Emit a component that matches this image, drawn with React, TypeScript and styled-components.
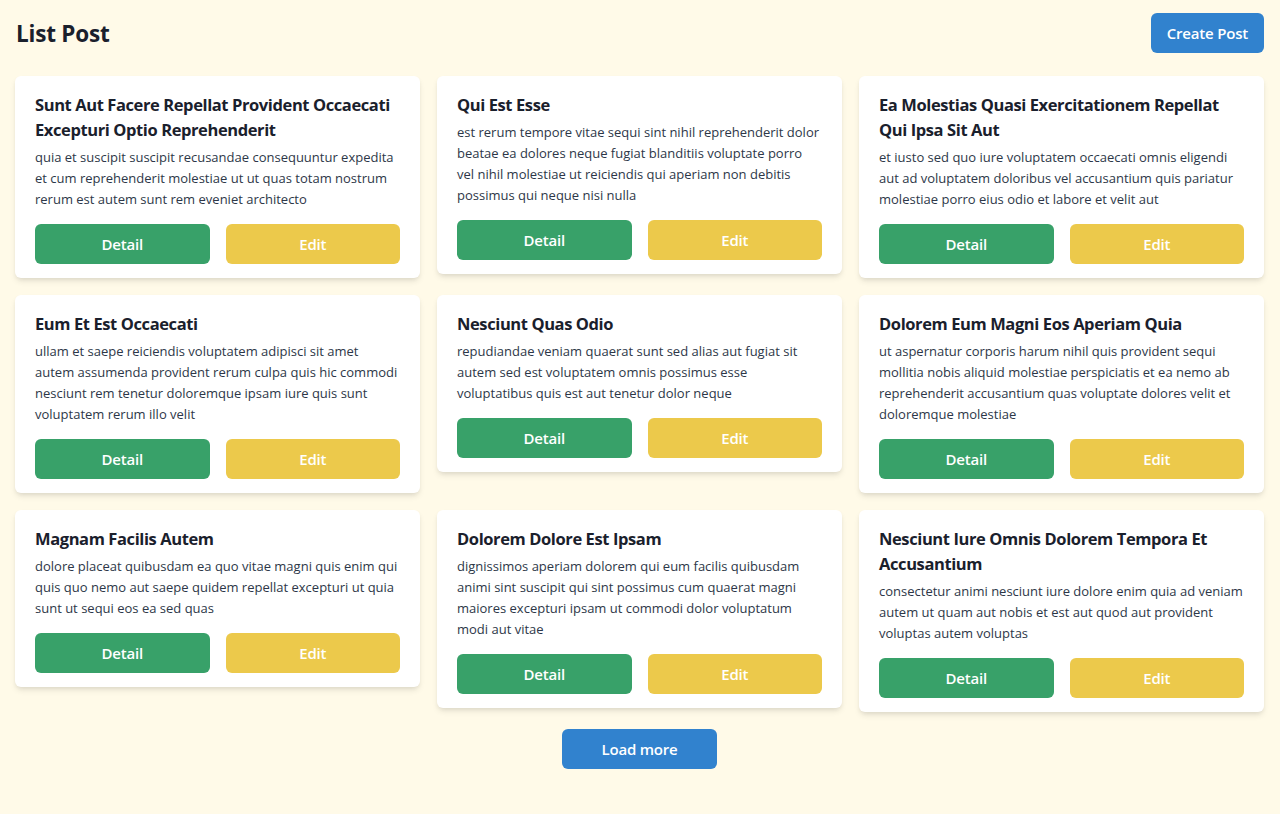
import React from "react";
import styled, { createGlobalStyle } from "styled-components";

const GlobalStyle = createGlobalStyle`
  html, body {
    margin: 0;
    padding: 0;
    background: #fffae8;
  }
  body {
    font-family: "Open Sans", "Noto Sans", sans-serif;
    color: #1a202c;
  }
  * { box-sizing: border-box; }
`;

const Page = styled.main`
  min-height: 814px;
  padding: 13px 16px 40px 15px;
  background: #fffae8;
`;

const Header = styled.header`
  display: flex;
  align-items: center;
  justify-content: space-between;
  height: 40px;
`;

const Title = styled.h1`
  margin: 0 0 0 1px;
  font-size: 22.5px;
  font-weight: 700;
  color: #1a202c;
  letter-spacing: -0.2px;
  line-height: 1;
  padding-top: 2px;
`;

const Button = styled.button<{ $tone: "blue" | "green" | "yellow"; $width?: number }>`
  height: 40px;
  border: none;
  border-radius: 6px;
  padding: 0 16px;
  font-family: inherit;
  font-size: 15px;
  font-weight: 600;
  letter-spacing: -0.2px;
  color: #ffffff;
  cursor: pointer;
  width: ${(p) => (p.$width ? `${p.$width}px` : "auto")};
  background: ${(p) =>
    p.$tone === "blue" ? "#3182ce" : p.$tone === "green" ? "#38a169" : "#ecc94b"};
`;

const Grid = styled.section`
  display: grid;
  grid-template-columns: repeat(3, 1fr);
  gap: 17px;
  align-items: start;
  margin-top: 23px;
`;

const Card = styled.article`
  background: #ffffff;
  border-radius: 6px;
  padding: 16px 20px 14px;
  box-shadow: 0 4px 6px -1px rgba(0, 0, 0, 0.1), 0 2px 4px -1px rgba(0, 0, 0, 0.06);
`;

const CardTitle = styled.h2`
  margin: 0 0 5px;
  font-size: 16.5px;
  line-height: 25px;
  font-weight: 700;
  letter-spacing: -0.4px;
  color: #1a202c;
`;

const CardBody = styled.p`
  margin: 0;
  font-size: 13px;
  line-height: 21px;
  color: #2d3748;
`;

const Actions = styled.div`
  display: grid;
  grid-template-columns: 1fr 1fr;
  gap: 16px;
  margin-top: 14px;
`;

const Footer = styled.div`
  display: flex;
  justify-content: center;
  margin-top: 17px;
`;

const posts = [
  {
    title: "Sunt Aut Facere Repellat Provident Occaecati Excepturi Optio Reprehenderit",
    body: "quia et suscipit suscipit recusandae consequuntur expedita et cum reprehenderit molestiae ut ut quas totam nostrum rerum est autem sunt rem eveniet architecto",
  },
  {
    title: "Qui Est Esse",
    body: "est rerum tempore vitae sequi sint nihil reprehenderit dolor beatae ea dolores neque fugiat blanditiis voluptate porro vel nihil molestiae ut reiciendis qui aperiam non debitis possimus qui neque nisi nulla",
  },
  {
    title: "Ea Molestias Quasi Exercitationem Repellat Qui Ipsa Sit Aut",
    body: "et iusto sed quo iure voluptatem occaecati omnis eligendi aut ad voluptatem doloribus vel accusantium quis pariatur molestiae porro eius odio et labore et velit aut",
  },
  {
    title: "Eum Et Est Occaecati",
    body: "ullam et saepe reiciendis voluptatem adipisci sit amet autem assumenda provident rerum culpa quis hic commodi nesciunt rem tenetur doloremque ipsam iure quis sunt voluptatem rerum illo velit",
  },
  {
    title: "Nesciunt Quas Odio",
    body: "repudiandae veniam quaerat sunt sed alias aut fugiat sit autem sed est voluptatem omnis possimus esse voluptatibus quis est aut tenetur dolor neque",
  },
  {
    title: "Dolorem Eum Magni Eos Aperiam Quia",
    body: "ut aspernatur corporis harum nihil quis provident sequi mollitia nobis aliquid molestiae perspiciatis et ea nemo ab reprehenderit accusantium quas voluptate dolores velit et doloremque molestiae",
  },
  {
    title: "Magnam Facilis Autem",
    body: "dolore placeat quibusdam ea quo vitae magni quis enim qui quis quo nemo aut saepe quidem repellat excepturi ut quia sunt ut sequi eos ea sed quas",
  },
  {
    title: "Dolorem Dolore Est Ipsam",
    body: "dignissimos aperiam dolorem qui eum facilis quibusdam animi sint suscipit qui sint possimus cum quaerat magni maiores excepturi ipsam ut commodi dolor voluptatum modi aut vitae",
  },
  {
    title: "Nesciunt Iure Omnis Dolorem Tempora Et Accusantium",
    body: "consectetur animi nesciunt iure dolore enim quia ad veniam autem ut quam aut nobis et est aut quod aut provident voluptas autem voluptas",
  },
];

export default function App() {
  return (
    <>
      <GlobalStyle />
      <Page>
        <Header>
          <Title>List Post</Title>
          <Button $tone="blue">Create Post</Button>
        </Header>
        <Grid>
          {posts.map((p) => (
            <Card key={p.title}>
              <CardTitle>{p.title}</CardTitle>
              <CardBody>{p.body}</CardBody>
              <Actions>
                <Button $tone="green">Detail</Button>
                <Button $tone="yellow">Edit</Button>
              </Actions>
            </Card>
          ))}
        </Grid>
        <Footer>
          <Button $tone="blue" $width={155}>Load more</Button>
        </Footer>
      </Page>
    </>
  );
}
